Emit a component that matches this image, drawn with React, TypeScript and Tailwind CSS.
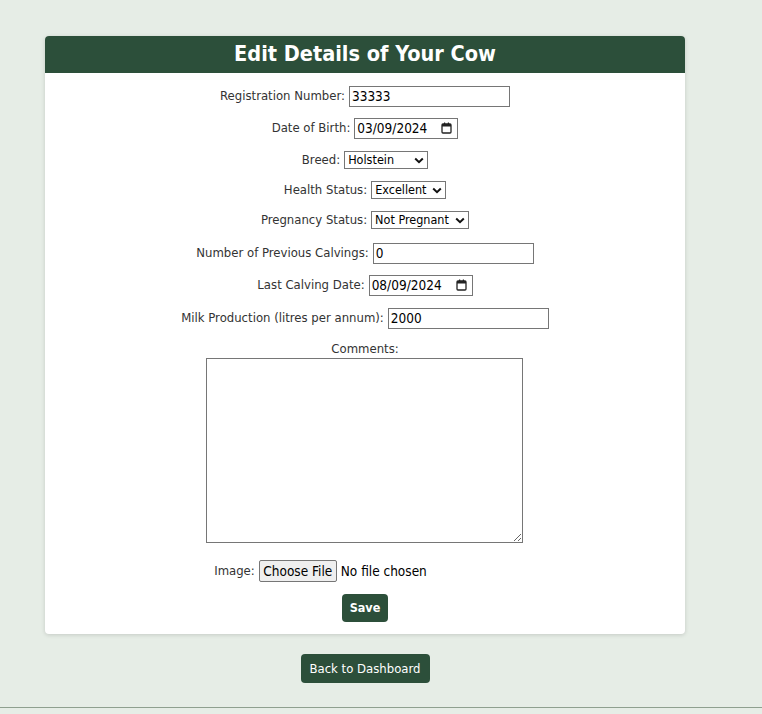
import React from "react";

const font = "font-['DejaVu_Sans',sans-serif] font-stretch-condensed";

function Cal() {
  return (
    <svg width="11" height="12" viewBox="0 0 11 12" className="shrink-0">
      <rect x="1" y="2" width="9" height="9" rx="1" fill="none" stroke="#222" strokeWidth="1.3" />
      <rect x="1" y="2" width="9" height="2.5" fill="#222" />
      <rect x="3" y="0.5" width="1.2" height="2.5" fill="#222" />
      <rect x="6.8" y="0.5" width="1.2" height="2.5" fill="#222" />
    </svg>
  );
}

function Chevron() {
  return (
    <svg width="10" height="7" viewBox="0 0 10 7" className="shrink-0">
      <path d="M1.2 1.5 L5 5.2 L8.8 1.5" fill="none" stroke="#111" strokeWidth="2" />
    </svg>
  );
}

function Row({ label, children, mt }: { label: string; children: React.ReactNode; mt: string }) {
  return (
    <div className={`flex h-[22px] items-center justify-center ${mt}`}>
      <span className="mr-[4px] text-[13px] text-[#333]">{label}</span>
      {children}
    </div>
  );
}

function TextBox({ value, w }: { value: string; w: string }) {
  return (
    <div className={`flex h-[21px] ${w} items-center border border-[#767676] bg-white pl-[2px] text-[13.5px] text-black`}>
      {value}
    </div>
  );
}

function DateBox({ value }: { value: string }) {
  return (
    <div className="flex h-[21px] w-[104px] items-center justify-between border border-[#767676] bg-white pl-[2px] pr-[5px] text-[13.5px] text-black">
      <span>{value}</span>
      <Cal />
    </div>
  );
}

function SelectBox({ value, w }: { value: string; w: string }) {
  return (
    <div className={`flex h-[18px] ${w} items-center justify-between border border-[#767676] bg-white pl-[3px] pr-[3px] text-[12.5px] text-black`}>
      <span>{value}</span>
      <Chevron />
    </div>
  );
}

export default function App() {
  return (
    <div className={`min-h-[714px] w-[762px] bg-[#e6ede6] ${font}`}>
      <div className="pt-[36px]">
        <div className="ml-[45px] w-[640px] overflow-hidden rounded-[4px] bg-white shadow-[0_1px_4px_rgba(0,0,0,0.15)]">
          <div className="flex h-[37px] items-center justify-center bg-[#2c4f3a]">
            <h1 className="text-[21.5px] font-bold text-white">Edit Details of Your Cow</h1>
          </div>
          <div className="flex flex-col pb-[12px] pt-[12px]">
            <Row label="Registration Number:" mt="mt-0">
              <TextBox value="33333" w="w-[161px]" />
            </Row>
            <Row label="Date of Birth:" mt="mt-[10px]">
              <DateBox value="03/09/2024" />
            </Row>
            <Row label="Breed:" mt="mt-[10px]">
              <SelectBox value="Holstein" w="w-[84px]" />
            </Row>
            <Row label="Health Status:" mt="mt-[8px]">
              <SelectBox value="Excellent" w="w-[75px]" />
            </Row>
            <Row label="Pregnancy Status:" mt="mt-[8px]">
              <SelectBox value="Not Pregnant" w="w-[98px]" />
            </Row>
            <Row label="Number of Previous Calvings:" mt="mt-[11px]">
              <TextBox value="0" w="w-[161px]" />
            </Row>
            <Row label="Last Calving Date:" mt="mt-[10px]">
              <DateBox value="08/09/2024" />
            </Row>
            <Row label="Milk Production (litres per annum):" mt="mt-[11px]">
              <TextBox value="2000" w="w-[161px]" />
            </Row>
            <div className="mt-[11px] flex h-[18px] items-center justify-center text-[13px] text-[#333]">
              Comments:
            </div>
            <div className="flex justify-center">
              <textarea className="ml-[-2px] block h-[185px] w-[317px] border border-[#767676] bg-white" />
            </div>
            <div className="mt-[17px] flex h-[22px] items-center justify-center pr-[89px]">
              <span className="mr-[4px] text-[13px] text-[#333]">Image:</span>
              <span className="flex h-[22px] w-[78px] items-center justify-center rounded-[2px] border border-[#767676] bg-[#efefef] text-[13.5px] text-black">
                Choose File
              </span>
              <span className="ml-[4px] text-[13.5px] text-black">No file chosen</span>
            </div>
            <div className="mt-[12px] flex justify-center">
              <button className="h-[28px] w-[46px] rounded-[4px] bg-[#2c4f3a] text-[12.5px] font-bold text-white">
                Save
              </button>
            </div>
          </div>
        </div>
        <div className="mt-[20px] flex w-[730px] justify-center">
          <button className="h-[29px] w-[129px] rounded-[4px] bg-[#2c4f3a] text-[13px] text-white">
            Back to Dashboard
          </button>
        </div>
        <div className="mt-[24px] h-px w-full bg-[#8fa08f]" />
      </div>
    </div>
  );
}
